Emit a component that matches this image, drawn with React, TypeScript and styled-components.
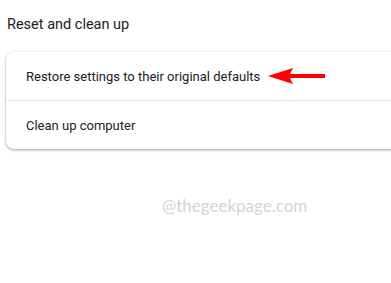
import React from 'react'
import styled, { createGlobalStyle } from 'styled-components'

const GlobalStyle = createGlobalStyle`
  html, body {
    margin: 0;
    padding: 0;
    background: #ffffff;
    overflow: hidden;
  }
  body {
    font-family: Roboto, 'Liberation Sans', Arial, sans-serif;
    color: #202124;
  }
`

const Page = styled.div`
  width: 391px;
  height: 283px;
  padding: 16px 0 0 6px;
  box-sizing: border-box;
  display: flex;
  flex-direction: column;
  overflow: hidden;
`

const Heading = styled.h2`
  margin: 0 0 0 1px;
  font-size: 14.5px;
  font-weight: 400;
  line-height: 18px;
  color: #202124;
`

const Card = styled.div`
  margin-top: 18px;
  margin-right: -40px;
  background: #ffffff;
  border-radius: 8px;
  box-shadow: 0 1px 2px rgba(60, 64, 67, 0.3), 0 1px 3px 1px rgba(60, 64, 67, 0.15);
  display: flex;
  flex-direction: column;
`

const Row = styled.div<{ $divider?: boolean }>`
  height: 48px;
  padding-left: 20px;
  display: flex;
  align-items: center;
  gap: 8px;
  font-size: 13px;
  color: #202124;
  border-top: ${(p) => (p.$divider ? '1px solid #e8eaed' : 'none')};
`

const Watermark = styled.div`
  margin-top: 46px;
  padding-left: 156px;
  font-family: Lato, 'Open Sans', sans-serif;
  font-size: 17px;
  color: #d4d4d4;
`

const Arrow = () => (
  <svg width="57" height="18" viewBox="0 0 57 18">
    <polygon points="0,9 25,1 22,7 57,7 57,11 22,11 25,17" fill="#ff0000" />
  </svg>
)

const App = () => {
  return (
    <Page>
      <GlobalStyle />
      <Heading>Reset and clean up</Heading>
      <Card>
        <Row>
          Restore settings to their original defaults
          <Arrow />
        </Row>
        <Row $divider>Clean up computer</Row>
      </Card>
      <Watermark>@thegeekpage.com</Watermark>
    </Page>
  )
}

export default App
